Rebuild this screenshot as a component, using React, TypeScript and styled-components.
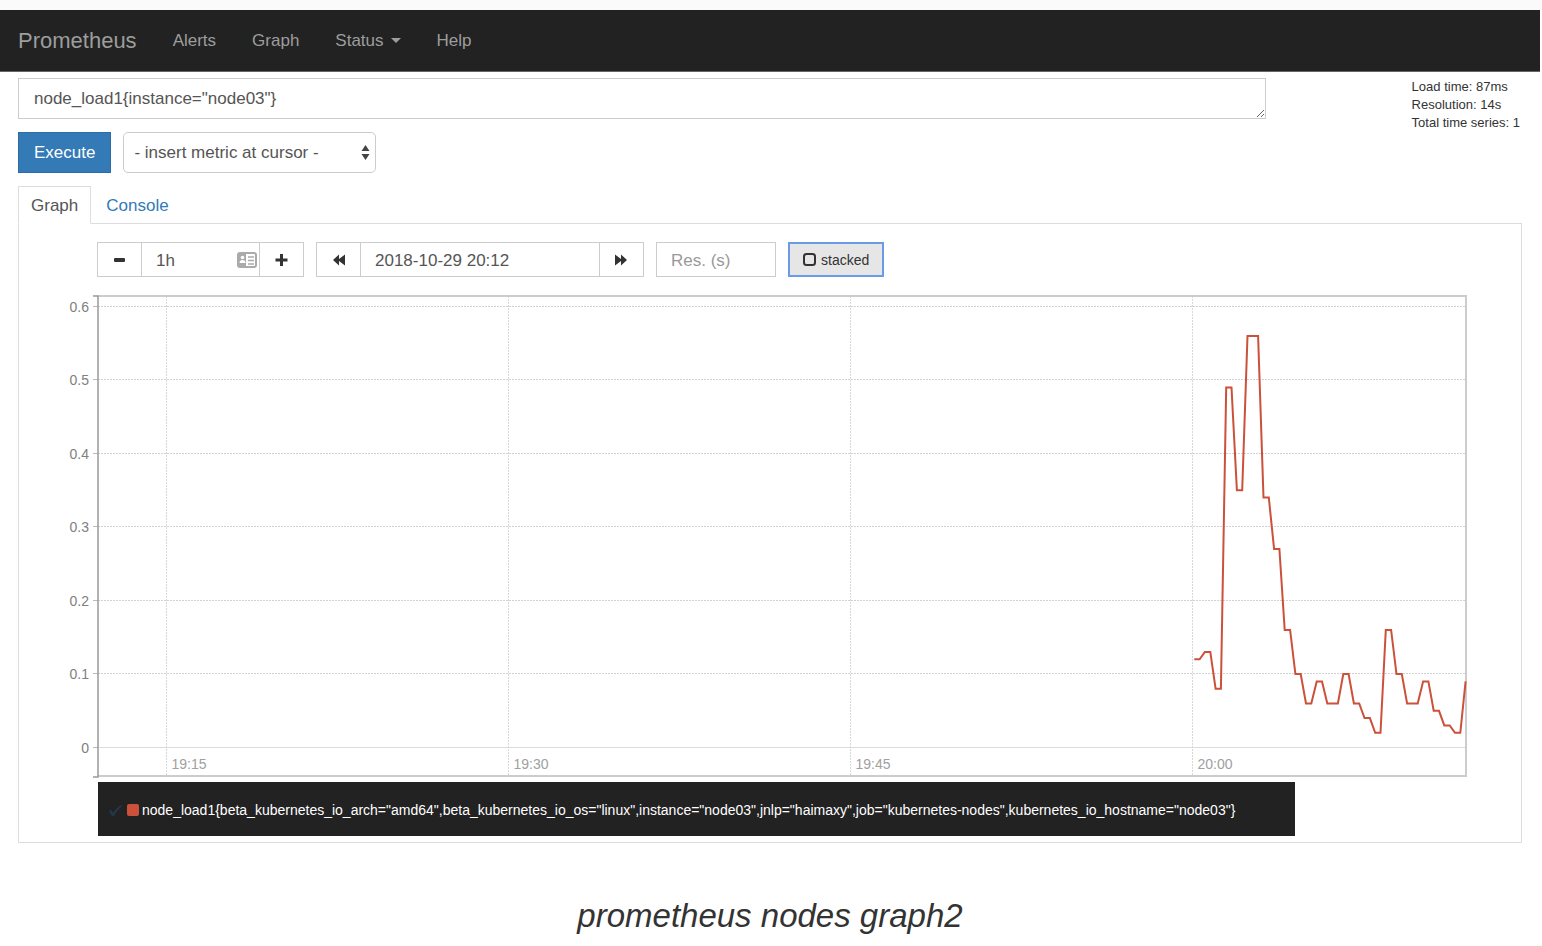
import React, { useState } from "react";
import styled, { createGlobalStyle } from "styled-components";

const GlobalStyle = createGlobalStyle`
  *, *::before, *::after { box-sizing: border-box; }
  body {
    margin: 0;
    background: #fff;
    color: #333;
    font-family: "Liberation Sans", Arial, sans-serif;
    font-size: 17px;
    line-height: 24px;
  }
  button, input, textarea, select { font: inherit; color: inherit; margin: 0; }
`;

const Page = styled.div`
  padding: 10px 2px 0 0;
  background: linear-gradient(#fafafa 10px, #fff 10px);
`;

const NavBar = styled.nav`
  display: flex;
  align-items: center;
  gap: 36px;
  height: 62px;
  padding: 0 18px;
  background: #222;
  border-bottom: 1px solid #666;
`;

const Brand = styled.a`
  color: #9d9d9d;
  font-size: 22px;
  text-decoration: none;
`;

const NavLink = styled.a`
  display: flex;
  align-items: center;
  gap: 7px;
  color: #9d9d9d;
  text-decoration: none;
`;

const Caret = styled.span`
  border-top: 5px solid #9d9d9d;
  border-left: 5px solid transparent;
  border-right: 5px solid transparent;
`;

const Main = styled.main`
  padding: 6px 18px 0;
`;

const QueryRow = styled.div`
  display: grid;
  grid-template-columns: minmax(0, 1247fr) minmax(112px, 256fr);
`;

const QueryForm = styled.form`
  display: flex;
  flex-direction: column;
  gap: 13px;
`;

const Expression = styled.textarea`
  display: block;
  width: 100%;
  height: 41px;
  padding: 8px 15px 6px;
  border: 1px solid #ccc;
  border-radius: 0;
  background: #fff;
  color: #555;
  overflow: hidden;
  resize: vertical;
`;

const Actions = styled.div`
  display: flex;
  gap: 12px;
`;

const ExecuteButton = styled.button`
  height: 41px;
  padding: 0 15px;
  border: 1px solid #2e6da4;
  background: #337ab7;
  color: #fff;
`;

const SelectBox = styled.div`
  position: relative;
  width: 253px;

  svg {
    position: absolute;
    right: 6px;
    top: 13px;
    pointer-events: none;
  }
`;

const MetricSelect = styled.select`
  appearance: none;
  width: 100%;
  height: 41px;
  padding: 0 24px 0 10px;
  border: 1px solid #ccc;
  border-radius: 5px;
  background: #fff;
  color: #555;
`;

const Stats = styled.div`
  justify-self: end;
  padding-right: 2px;
  font-size: 13px;
  line-height: 18px;
`;

const Tabs = styled.div`
  display: flex;
  gap: 2px;
  margin-top: 13px;
  border-bottom: 1px solid #ddd;
`;

const Tab = styled.button<{ $active?: boolean }>`
  height: 38px;
  margin-bottom: -1px;
  padding: 1px 12px 0;
  border: 1px solid ${(p) => (p.$active ? "#ddd" : "transparent")};
  border-bottom-color: ${(p) => (p.$active ? "#fff" : "transparent")};
  background: ${(p) => (p.$active ? "#fff" : "transparent")};
  color: ${(p) => (p.$active ? "#555" : "#337ab7")};
`;

const Panel = styled.section`
  padding: 18px 54px 6px 48px;
  border: 1px solid #ddd;
  border-top: 0;
`;

const Toolbar = styled.div`
  display: flex;
  gap: 12px;
  padding-left: 30px;
`;

const Group = styled.div`
  display: flex;
  height: 35px;
  border: 1px solid #ccc;
`;

const GroupButton = styled.button`
  display: grid;
  place-items: center;
  width: 43px;
  padding: 0;
  border: 0;
  background: #fff;
  color: #333;
`;

const Field = styled.input<{ $width: number }>`
  width: ${(p) => p.$width}px;
  padding: 2px 14px 0;
  border: 0;
  background: transparent;
  color: #555;
  &::placeholder { color: #999; opacity: 1; }
`;

const FieldCell = styled.div`
  display: flex;
  align-items: center;
  border: solid #ccc;
  border-width: 0 1px;

  svg { margin-right: 2px; }
`;

const StackedButton = styled.button`
  display: flex;
  align-items: center;
  gap: 5px;
  height: 35px;
  padding: 0 13px;
  border: 2px solid #6a9be8;
  background: #e6e6e6;
  color: #333;
  font-size: 14px;
`;

const Chart = styled.svg`
  display: block;
  width: 100%;
  height: auto;
  margin-top: 17px;
  font-size: 14px;
`;

const Legend = styled.div`
  display: flex;
  align-items: center;
  width: fit-content;
  height: 54px;
  margin: 4px 0 0 31px;
  padding: 2px 60px 0 11px;
  background: #222;
  color: #fff;
  font-size: 14px;
`;

const Swatch = styled.span`
  width: 12px;
  height: 12px;
  margin: 0 3px 0 5px;
  border-radius: 2px;
  background: #cb513a;
`;

const Caption = styled.p`
  margin: 53px 0 0;
  font-size: 33px;
  line-height: 40px;
  font-style: italic;
  text-align: center;
`;

// One sample every 14 seconds, from 20:00:04 to the end of the range.
const samples = [
  0.12, 0.12, 0.13, 0.13, 0.08, 0.08, 0.49, 0.49, 0.35, 0.35, 0.56, 0.56, 0.56,
  0.34, 0.34, 0.27, 0.27, 0.16, 0.16, 0.1, 0.1, 0.06, 0.06, 0.09, 0.09, 0.06,
  0.06, 0.06, 0.1, 0.1, 0.06, 0.06, 0.04, 0.04, 0.02, 0.02, 0.16, 0.16, 0.1,
  0.1, 0.06, 0.06, 0.06, 0.09, 0.09, 0.05, 0.05, 0.03, 0.03, 0.02, 0.02, 0.09,
];
const yTicks = [0, 0.1, 0.2, 0.3, 0.4, 0.5, 0.6];
const xTicks = [
  { x: 99.5, label: "19:15" },
  { x: 441.5, label: "19:30" },
  { x: 783.5, label: "19:45" },
  { x: 1125.5, label: "20:00" },
];
const yOf = (v: number) => 453.5 - v * 735;

function LoadChart() {
  const points = samples
    .map((v, i) => `${(1127.3 + i * 5.32).toFixed(1)},${yOf(v).toFixed(1)}`)
    .join(" ");
  return (
    <Chart viewBox="0 0 1400 484" role="img" aria-label="node_load1 over one hour">
      {yTicks.map((v) => {
        const y = Math.round(yOf(v)) - 0.5;
        return (
          <g key={v}>
            <line x1="31" x2="1399" y1={y} y2={y} stroke={v ? "#d2d2d2" : "#dcdcdc"} strokeDasharray={v ? "2 1" : undefined} />
            <line x1="26" x2="31" y1={y} y2={y} stroke="#bbb" />
            <text x="22" y={y + 5} textAnchor="end" fill="#808080">{v}</text>
          </g>
        );
      })}
      {xTicks.map((t) => (
        <g key={t.label}>
          <line x1={t.x} x2={t.x} y1="2" y2="482" stroke="#d8d8d8" strokeDasharray="2 1" />
          <text x={t.x + 5} y="475" fill="#a0a0a0">{t.label}</text>
        </g>
      ))}
      <path d="M31 2H1399V482H31" fill="none" stroke="#ccc" strokeWidth="2" />
      <path d="M26 2H31V483H26" fill="none" stroke="#999" strokeWidth="1.5" />
      <polyline points={points} fill="none" stroke="#cb513a" strokeWidth="2" />
    </Chart>
  );
}

export default function App() {
  const [tab, setTab] = useState("Graph");
  const [stacked, setStacked] = useState(false);
  return (
    <>
      <GlobalStyle />
      <Page>
        <NavBar>
          <Brand href="#">Prometheus</Brand>
          <NavLink href="#alerts">Alerts</NavLink>
          <NavLink href="#graph">Graph</NavLink>
          <NavLink href="#status">Status <Caret /></NavLink>
          <NavLink href="#help">Help</NavLink>
        </NavBar>
        <Main>
          <QueryRow>
            <QueryForm onSubmit={(e) => e.preventDefault()}>
              <Expression aria-label="Expression" rows={1} defaultValue={'node_load1{instance="node03"}'} />
              <Actions>
                <ExecuteButton type="submit">Execute</ExecuteButton>
                <SelectBox>
                  <MetricSelect aria-label="Metric">
                    <option>- insert metric at cursor -</option>
                  </MetricSelect>
                  <svg width="9" height="16" viewBox="0 0 9 16" fill="#444">
                    <path d="M4.500 0L8.500 6H0.500zM4.500 15L8.500 9H0.500z" />
                  </svg>
                </SelectBox>
              </Actions>
            </QueryForm>
            <Stats>
              <div>Load time: 87ms</div>
              <div>Resolution: 14s</div>
              <div>Total time series: 1</div>
            </Stats>
          </QueryRow>
          <Tabs role="tablist">
            {["Graph", "Console"].map((name) => (
              <Tab key={name} role="tab" aria-selected={tab === name} $active={tab === name} onClick={() => setTab(name)}>
                {name}
              </Tab>
            ))}
          </Tabs>
          <Panel>
            <Toolbar>
              <Group>
                <GroupButton aria-label="Shrink range">
                  <svg width="14" height="14" viewBox="0 0 14 14"><rect x="1" y="5" width="11" height="4" rx="1" fill="currentColor" /></svg>
                </GroupButton>
                <FieldCell>
                  <Field $width={95} aria-label="Range" defaultValue="1h" />
                  <svg width="20" height="16" viewBox="0 0 20 16">
                    <rect x="1" y="1" width="18" height="14" rx="2" fill="#fff" stroke="#aaa" strokeWidth="2" />
                    <path d="M2 2H9V14H2z" fill="#aaa" />
                    <circle cx="5.5" cy="5.5" r="1.8" fill="#fff" />
                    <path d="M2.5 11Q2.5 8 5.5 8T8.500 11z" fill="#fff" />
                    <path d="M11 5H17M11 8.500H17M11 12H17" stroke="#aaa" strokeWidth="1.5" />
                  </svg>
                </FieldCell>
                <GroupButton aria-label="Grow range">
                  <svg width="14" height="14" viewBox="0 0 14 14"><path d="M5 1h3v4.500H12.500v3H8V13h-3V8.500H0.500v-3h4.500z" fill="currentColor" /></svg>
                </GroupButton>
              </Group>
              <Group>
                <GroupButton aria-label="Earlier">
                  <svg width="14" height="14" viewBox="0 0 14 14"><path d="M7 1.500V6L13 1.500V12.500L7 8V12.500L1 7z" fill="currentColor" /></svg>
                </GroupButton>
                <FieldCell>
                  <Field $width={238} aria-label="End time" defaultValue="2018-10-29 20:12" />
                </FieldCell>
                <GroupButton aria-label="Later">
                  <svg width="14" height="14" viewBox="0 0 14 14"><path d="M6 1.500V6L0 1.500V12.500L6 8V12.500L12 7z" fill="currentColor" /></svg>
                </GroupButton>
              </Group>
              <Group>
                <Field $width={118} aria-label="Resolution in seconds" placeholder="Res. (s)" />
              </Group>
              <StackedButton aria-pressed={stacked} onClick={() => setStacked(!stacked)}>
                <svg width="13" height="13" viewBox="0 0 13 13">
                  <rect x="1" y="1" width="11" height="11" rx="2.500" fill={stacked ? "#333" : "none"} stroke="#333" strokeWidth="2" />
                </svg>
                stacked
              </StackedButton>
            </Toolbar>
            <LoadChart />
            <Legend>
              <svg width="13" height="13" viewBox="0 0 13 13"><path d="M0 7L2 6L4 9Q7 4 12 1L13 2Q8 6 5 12H3z" fill="#22384a" /></svg>
              <Swatch />
              {'node_load1{beta_kubernetes_io_arch="amd64",beta_kubernetes_io_os="linux",instance="node03",jnlp="haimaxy",job="kubernetes-nodes",kubernetes_io_hostname="node03"}'}
            </Legend>
          </Panel>
        </Main>
        <Caption>prometheus nodes graph2</Caption>
      </Page>
    </>
  );
}
